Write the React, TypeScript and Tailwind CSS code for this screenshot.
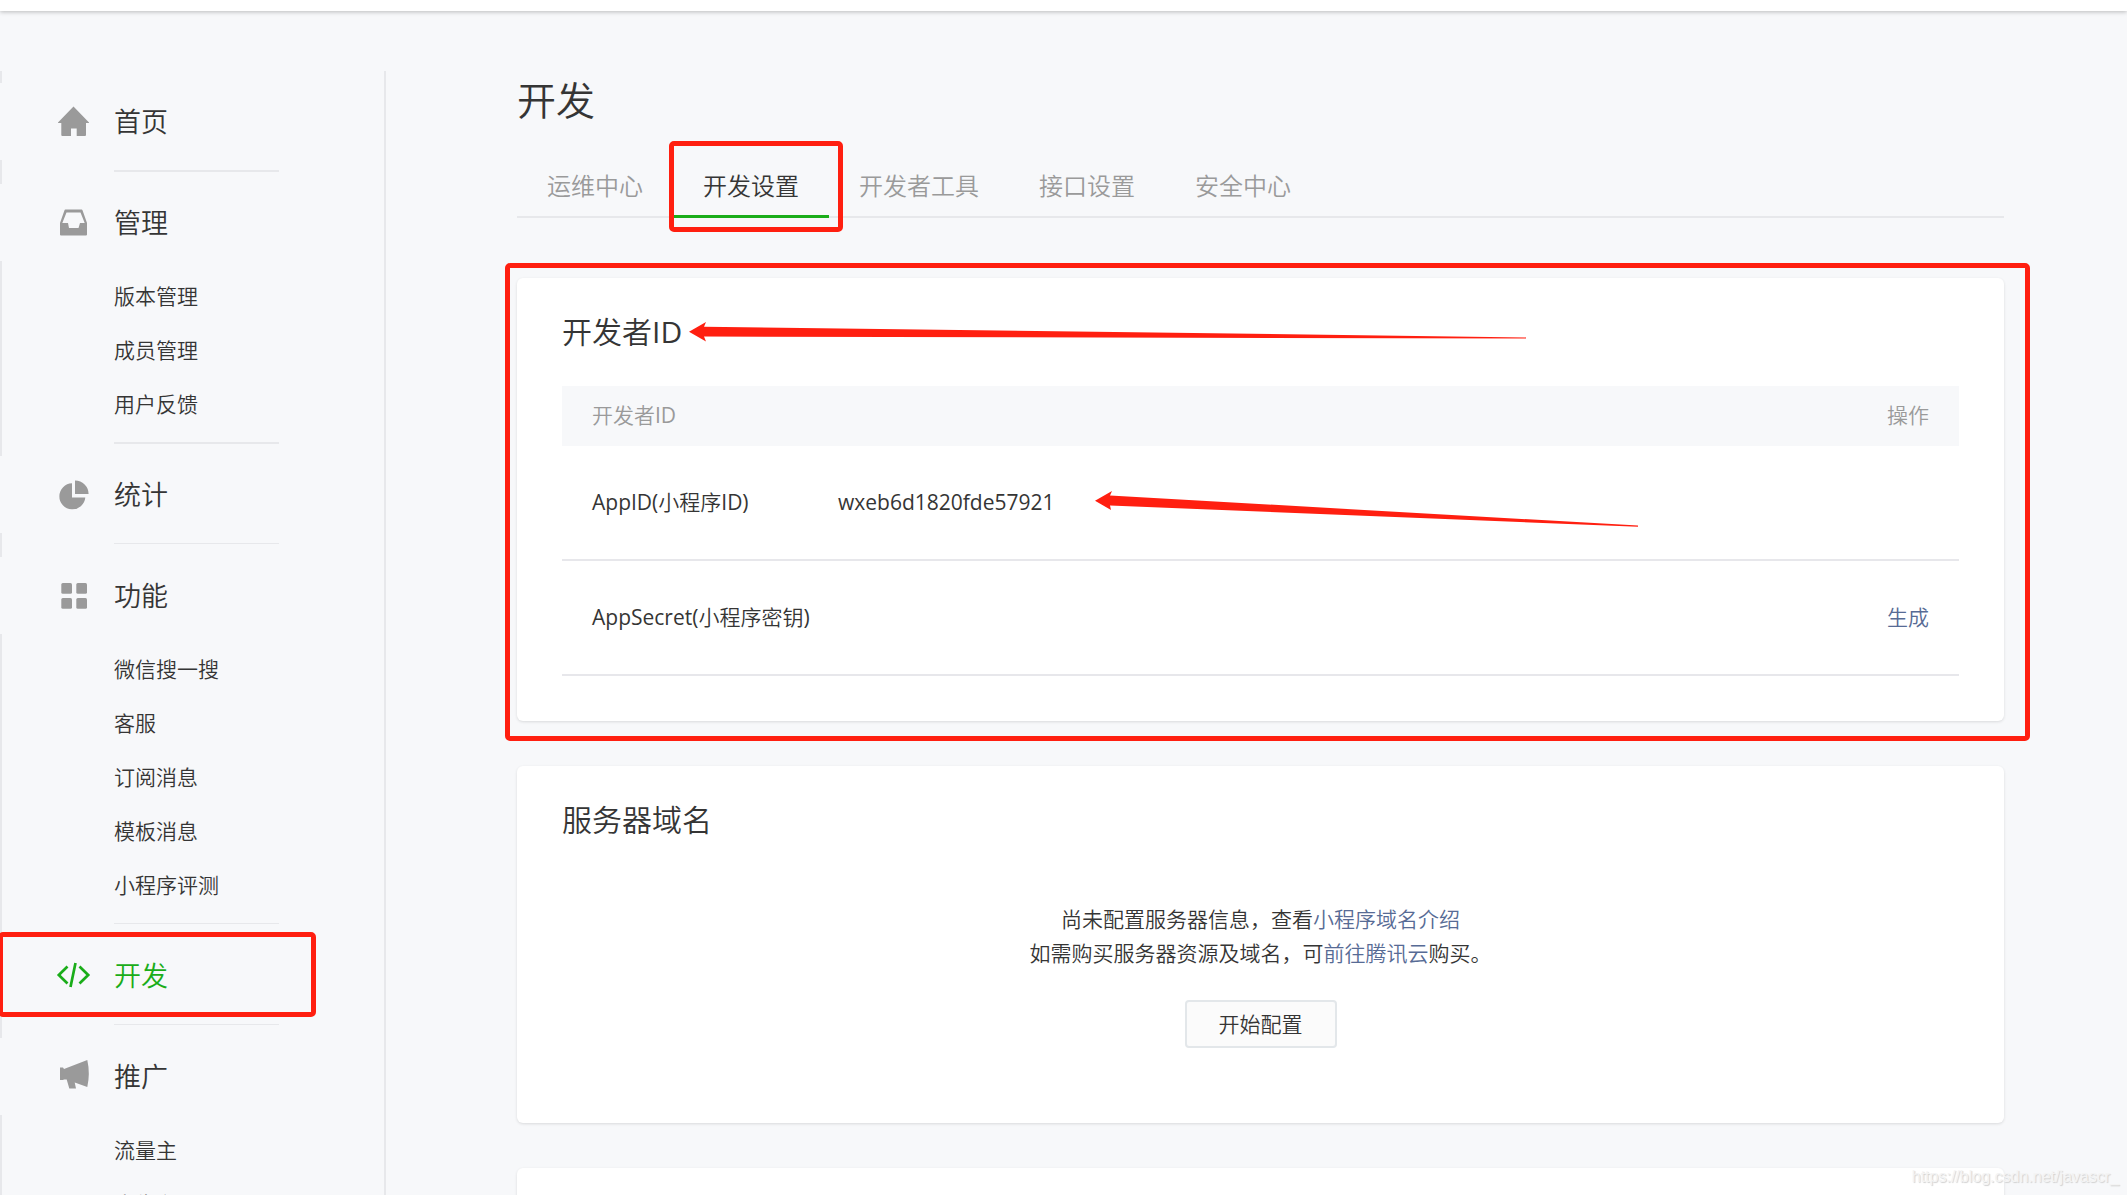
import React from 'react';

interface MenuGroup {
  title: string;
  icon: React.ReactNode;
  items?: string[];
  active?: boolean;
  thinLine?: boolean;
}

const menu: MenuGroup[] = [
  {
    title: '首页',
    icon: <path fill="currentColor" d="M17.5 2.5 33 18.5V19H30V31a1 1 0 0 1-1 1H20.7V24.5H15V32H6.3a1 1 0 0 1-1-1V19H2V18.5Z" />,
  },
  {
    title: '管理',
    icon: (
      <path
        fill="currentColor"
        fillRule="evenodd"
        d="M9.5 4.5H25.5a1 1 0 0 1 1 .7L31 18V29.5a1 1 0 0 1-1 1H5a1 1 0 0 1-1-1V18L8.5 5.2a1 1 0 0 1 1-.7ZM10.5 7.5 6.3 18H12L13 23H22.5L24 18H28.7L24.5 7.5Z"
      />
    ),
    items: ['版本管理', '成员管理', '用户反馈'],
  },
  {
    title: '统计',
    icon: <path fill="currentColor" d="M16 6.3A13 13 0 1 0 29.3 20.5H16ZM19 3.5A13.5 13.5 0 0 1 32.6 17H19Z" />,
    thinLine: true,
  },
  {
    title: '功能',
    icon: (
      <g fill="currentColor">
        <rect x="5.3" y="5" width="10.7" height="10.7" rx="1.5" />
        <rect x="20.3" y="5" width="10.7" height="10.7" rx="1.5" />
        <rect x="5.3" y="20" width="10.7" height="10.7" rx="1.5" />
        <rect x="20.3" y="20" width="10.7" height="10.7" rx="1.5" />
      </g>
    ),
    items: ['微信搜一搜', '客服', '订阅消息', '模板消息', '小程序评测'],
    thinLine: true,
  },
  {
    title: '开发',
    icon: (
      <path
        fill="none"
        stroke="currentColor"
        strokeWidth="2.7"
        d="M11.5 8.5 2.8 17 11.5 25.5M23.5 8.5 32.2 17 23.5 25.5M19.5 5 14.5 29"
      />
    ),
    active: true,
    thinLine: true,
  },
  {
    title: '推广',
    icon: (
      <path
        fill="currentColor"
        d="M4 8.5H7L8 10 31.3 1Q34.3 14.5 31.3 28L18.7 23.5 20 29.5H13.3L10.7 20.5H8L7 21H4Z"
      />
    ),
    items: ['流量主', '广告主'],
  },
];

const tabs = ['运维中心', '开发设置', '开发者工具', '接口设置', '安全中心'];

function SideMenu() {
  return (
    <nav className="w-[386px] shrink-0 border-x-2 border-[#e7e8eb] pt-3">
      {menu.map((group) => (
        <div key={group.title}>
          <a
            href="#"
            className={`relative -ml-0.5 mr-12 flex h-[77px] items-center bg-[#f7f8fa] pl-14 ${
              group.active ? 'text-[#1aad19]' : 'text-[#9a9a9a]'
            }`}
          >
            <svg className="size-9" viewBox="0 0 36 36" aria-hidden="true">
              {group.icon}
            </svg>
            <span className={`ml-[22px] text-[27px] leading-9 ${group.active ? '' : 'text-[#353535]'}`}>
              {group.title}
            </span>
            {group.active && (
              <span className="absolute -top-[5px] -bottom-[3px] -left-0.5 w-[318px] rounded-[5px] border-[5px] border-[#ff1f10]" />
            )}
          </a>
          {group.items && (
            <ul className="pt-2 pb-px pl-28">
              {group.items.map((item) => (
                <li key={item}>
                  <a href="#" className="block text-[21px] leading-[54px] font-light">
                    {item}
                  </a>
                </li>
              ))}
            </ul>
          )}
          <div
            className={`mt-2.5 ml-28 h-[14px] w-[165px] border-[#e7e8eb] ${group.thinLine ? 'border-t' : 'border-t-2'}`}
          />
        </div>
      ))}
    </nav>
  );
}

function Card({ title, children }: { title?: string; children?: React.ReactNode }) {
  return (
    <section className="relative mb-[45px] min-h-[200px] rounded-md bg-white px-[45px] pt-[30px] pb-[45px] shadow-[0_1px_3px_rgba(0,0,0,0.12)]">
      {title && <h3 className="text-[30px] leading-[48px]">{title}</h3>}
      {children}
    </section>
  );
}

export default function App() {
  return (
    <div className="relative flex h-screen flex-col overflow-hidden bg-[#f7f8fa] font-['Open_Sans','Noto_Sans_CJK_SC_DemiLight','Noto_Sans_CJK_SC',sans-serif] text-[#353535]">
      <header className="h-[11px] shrink-0 bg-white shadow-[0_1px_4px_rgba(0,0,0,0.25)]" />

      <div className="flex min-h-0 flex-1 pt-[60px]">
        <SideMenu />

        <main className="mr-[123px] ml-[131px] min-w-0 flex-1">
          <h2 className="text-[39px] leading-[58px]">开发</h2>

          <div className="mt-6 mb-[60px] flex border-b-2 border-[#e7e8eb]">
            {tabs.map((tab) => {
              const active = tab === '开发设置';
              return (
                <a
                  key={tab}
                  href="#"
                  className={`relative -mb-0.5 h-[65px] px-[30px] text-2xl leading-[65px] ${
                    active ? 'border-b-[3px] border-[#1aad19]' : 'text-[#9a9a9a]'
                  }`}
                >
                  {tab}
                  {active && (
                    <span className="absolute -top-3 -right-[14px] -bottom-[17px] -left-1 rounded-[5px] border-[5px] border-[#ff1f10]" />
                  )}
                </a>
              );
            })}
          </div>

          <Card title="开发者ID">
            <table className="mt-[30px] w-full border-separate border-spacing-0 text-left text-[21px]">
              <thead className="bg-[#f7f8fa] text-[#9a9a9a]">
                <tr className="h-[60px]">
                  <th className="pl-[30px] font-normal" colSpan={2}>开发者ID</th>
                  <th className="pr-[30px] text-right font-light">操作</th>
                </tr>
              </thead>
              <tbody className="[&_td]:border-b-2 [&_td]:border-[#e7e7eb]">
                <tr className="h-[115px]">
                  <td className="w-[276px] pl-[30px]">AppID(小程序ID)</td>
                  <td>wxeb6d1820fde57921</td>
                  <td />
                </tr>
                <tr className="h-[115px]">
                  <td className="pl-[30px]">AppSecret(小程序密钥)</td>
                  <td />
                  <td className="pr-[30px] text-right font-light">
                    <a href="#" className="text-[#576b95]">生成</a>
                  </td>
                </tr>
              </tbody>
            </table>

            {/* red markup over the card */}
            <span className="absolute -top-[15px] -right-[26px] -bottom-5 -left-3 rounded-[5px] border-[5px] border-[#ff1f10]" />
            <svg className="absolute top-11 left-[172px] h-5 w-[837px]" viewBox="0 0 837 20" aria-hidden="true">
              <path fill="#ff1f10" d="M0 9.7 17 0 15 4.7 837 15.4V16.6L15 14.5 17 19.5Z" />
            </svg>
            <svg className="absolute top-[213px] left-[578px] h-9 w-[543px]" viewBox="0 0 543 36" aria-hidden="true">
              <path fill="#ff1f10" d="M0 9.7 17 0 15 4.5 543 34.6V35.8L15 14.5 16 19Z" />
            </svg>
          </Card>

          <Card title="服务器域名">
            <div className="flex flex-col items-center pt-[58px] pb-[30px] font-light">
              <p className="text-center text-[21px] leading-[34px]">
                尚未配置服务器信息，查看
                <a href="#" className="text-[#576b95]">小程序域名介绍</a>
                <br />
                如需购买服务器资源及域名，可
                <a href="#" className="text-[#576b95]">前往腾讯云</a>
                购买。
              </p>
              <button
                type="button"
                className="mt-[30px] h-12 rounded border-2 border-[#e3e7ea] bg-[#fbfbfb] px-8 text-[21px] leading-none"
              >
                开始配置
              </button>
            </div>
          </Card>

          <Card />
        </main>
      </div>

      <div className="absolute right-2 bottom-1.5 font-['Liberation_Sans',sans-serif] text-base text-[#f4f4f4] [text-shadow:1px_1px_1px_#d0d0d0]">
        https://blog.csdn.net/javascr_
      </div>
    </div>
  );
}
